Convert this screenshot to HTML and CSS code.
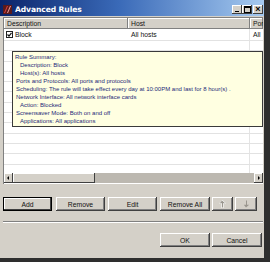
FILE: index.html
```html
<!DOCTYPE html>
<html lang="en">
<head>
  <meta charset="UTF-8" />
  <title>Advanced Rules</title>
  <link rel="stylesheet" href="styles.css">
</head>
<body>
  <div class="window">
    <div class="titlebar">
      <svg class="app-icon" width="9" height="9" viewBox="0 0 9 9">
        <rect x="0" y="0" width="9" height="9" fill="#5a1a1a"/>
        <path d="M1 8 L4 1 L5 1 L2 8 Z" fill="#e04040"/>
        <path d="M4 8 L7 1 L8 1 L5 8 Z" fill="#f0a0a0"/>
      </svg>
      <span class="title">Advanced Rules</span>
      <div class="caption-btns">
        <span class="cbtn"><i class="min"></i></span>
        <span class="cbtn"><i class="max"></i></span>
        <span class="cbtn close">×</span>
      </div>
    </div>

    <div class="list">
      <div class="list-head">
        <div class="col">Description</div>
        <div class="col">Host</div>
        <div class="col">Por</div>
      </div>
      <div class="rows">
        <div class="row">
          <div class="cell">
            <svg class="check" width="7" height="7" viewBox="0 0 7 7">
              <rect x="0.5" y="0.5" width="6" height="6" fill="#fff" stroke="#222"/>
              <path d="M1.5 3.5 L3 5 L5.5 1.8" fill="none" stroke="#111" stroke-width="1.2"/>
            </svg>Block
          </div>
          <div class="cell">All hosts</div>
          <div class="cell">All</div>
        </div>
        <div class="row"></div>
        <div class="row"></div>
        <div class="row"></div>
        <div class="row"></div>
        <div class="row"></div>
        <div class="row"></div>
        <div class="row"></div>
        <div class="row"></div>
        <div class="row"></div>
        <div class="row"></div>
        <div class="row"></div>
        <div class="row"></div>
        <div class="row"></div>

        <div class="tooltip">
          <div>Rule Summary:</div>
          <div class="ind">Description: Block</div>
          <div class="ind">Host(s): All hosts</div>
          <div class="sm">Ports and Protocols: All ports and protocols</div>
          <div class="sm">Scheduling: The rule will take effect every day at 10:00PM and last for 8 hour(s) .</div>
          <div class="sm">Network Interface: All network interface cards</div>
          <div class="ind">Action: Blocked</div>
          <div class="sm">Screensaver Mode: Both on and off</div>
          <div class="ind">Applications: All applications</div>
        </div>
      </div>
      <div class="hscroll">
        <span class="arrow left"></span>
        <span class="thumb"></span>
        <span class="track"></span>
        <span class="arrow right"></span>
      </div>
    </div>

    <div class="actions">
      <button class="btn default">Add</button>
      <button class="btn">Remove</button>
      <button class="btn">Edit</button>
      <button class="btn wide">Remove All</button>
      <button class="btn icon">
        <svg width="7" height="8" viewBox="0 0 7 8"><path d="M3.5 0 L7 3.5 L4.5 3.5 L4.5 8 L2.5 8 L2.5 3.5 L0 3.5 Z" fill="#fff"/><path d="M3 0.5 L6.2 3.2 L4 3.2 L4 7.5 L3 7.5 L3 3.2 L0.8 3.2 Z" fill="#9a968e"/></svg>
      </button>
      <button class="btn icon down">
        <svg width="7" height="8" viewBox="0 0 7 8"><path d="M3 7.5 L0.8 4.8 L3 4.8 L3 0.5 L4 0.5 L4 4.8 L6.2 4.8 Z" fill="#9a968e"/></svg>
      </button>
    </div>

    <div class="sep"></div>

    <div class="footer">
      <button class="btn ok">OK</button>
      <button class="btn ok">Cancel</button>
    </div>
  </div>
</body>
</html>
```

FILE: styles.css
```css
body {
  margin: 0;
  width: 270px;
  height: 262px;
  overflow: hidden;
  background: #2e2e2e;
  font-family: 'Liberation Sans', Arial, sans-serif;
  font-size: 6.8px;
  color: #111;
}

.window {
  width: 264px;
  height: 258px;
  background: #d4d0c8;
  display: flex;
  flex-direction: column;
}

.titlebar {
  height: 16px;
  display: flex;
  align-items: center;
  padding: 2px 0 0 3px;
  box-sizing: border-box;
  background: linear-gradient(to right, #0a246a 0%, #3a6ab8 45%, #a6caf0 100%);
}

.app-icon {
  margin-right: 3px;
}

.title {
  color: #fff;
  font-weight: bold;
  font-size: 7.6px;
  font-family: 'DejaVu Sans', sans-serif;
  letter-spacing: -0.1px;
}

.caption-btns {
  margin-left: auto;
  margin-right: 1px;
  display: flex;
}

.cbtn {
  width: 10px;
  height: 9px;
  background: #d4d0c8;
  box-shadow: inset -1px -1px #404040, inset 1px 1px #fff;
  display: flex;
  align-items: center;
  justify-content: center;
  font-size: 9px;
  line-height: 9px;
  font-weight: bold;
  color: #000;
}

.cbtn.close {
  margin-left: 1px;
}

.cbtn .min {
  width: 4px;
  height: 1px;
  background: #000;
  margin-top: 4px;
}

.cbtn .max {
  width: 5px;
  height: 4px;
  border: 1px solid #000;
  border-top-width: 2px;
}

.list {
  margin: 1px 1px 0 3px;
  height: 166px;
  background: #fff;
  border-left: 1px solid #808080;
  border-top: 1px solid #808080;
  display: flex;
  flex-direction: column;
  overflow: hidden;
}

.list-head {
  display: grid;
  grid-template-columns: 124px 122px 1fr;
  height: 11px;
  flex: none;
}

.list-head .col {
  background: #d4d0c8;
  box-shadow: inset -1px -1px #808080, inset 1px 1px #fff;
  padding-left: 3px;
  line-height: 11px;
  white-space: nowrap;
  overflow: hidden;
}

.rows {
  position: relative;
  flex: 1;
  overflow: hidden;
  background: linear-gradient(#e4e4e4, #e4e4e4) 245px 0 / 1px 100% no-repeat, #fff;
}

.row {
  display: grid;
  grid-template-columns: 124px 122px 1fr;
  height: 10.3px;
  border-bottom: 1px solid #e2e2e2;
  box-sizing: border-box;
}

.row:first-child {
  height: 12px;
}

.cell {
  display: flex;
  align-items: center;
  padding-left: 2px;
  white-space: nowrap;
  overflow: hidden;
}

.row .cell:nth-child(2),
.row .cell:nth-child(3) {
  padding-left: 3px;
}

.check {
  margin-right: 2px;
}

.tooltip {
  position: absolute;
  left: 8px;
  right: 0;
  top: 22px;
  height: 76px;
  box-sizing: border-box;
  background: #ffffe1;
  border: 1px solid #3a3a3a;
  padding: 1px 0 0 2px;
  color: #1d2a78;
  font-size: 6px;
  line-height: 8px;
  white-space: nowrap;
  overflow: hidden;
}

.tooltip .ind {
  padding-left: 5px;
}

.tooltip .sm {
  padding-left: 1px;
}

.hscroll {
  height: 10px;
  display: flex;
  flex: none;
  margin-bottom: 1px;
}

.hscroll .arrow {
  width: 9px;
  background: #d4d0c8;
  box-shadow: inset -1px -1px #404040, inset 1px 1px #fff;
  position: relative;
}

.hscroll .arrow::after {
  content: "";
  position: absolute;
  top: 3px;
  border-top: 2px solid transparent;
  border-bottom: 2px solid transparent;
}

.hscroll .left::after {
  left: 3px;
  border-right: 2px solid #000;
}

.hscroll .right::after {
  left: 4px;
  border-left: 2px solid #000;
}

.hscroll .thumb {
  width: 82px;
  background: #d4d0c8;
  box-shadow: inset -1px -1px #404040, inset 1px 1px #fff;
}

.hscroll .track {
  flex: 1;
  background: #bcb8b0;
}

.actions {
  display: flex;
  margin-top: 13px;
  padding-left: 3px;
  height: 14px;
}

.btn {
  margin: 0;
  padding: 0;
  border: none;
  height: 14px;
  width: 49px;
  margin-right: 3px;
  background: #d4d0c8;
  font-family: 'Liberation Sans', Arial, sans-serif;
  font-size: 6.8px;
  color: #111;
  box-shadow: inset -1px -1px #404040, inset 1px 1px #fff, inset -2px -2px #808080;
}

.btn.default {
  margin-right: 4px;
  box-shadow: inset 0 0 0 1px #000, inset -2px -2px #404040, inset 2px 2px #fff;
}

.btn.wide {
  width: 50px;
  margin-right: 2px;
}

.btn.icon {
  width: 21px;
  margin-right: 2px;
  display: flex;
  align-items: center;
  justify-content: center;
}

.btn.icon.down {
  width: 22px;
}

.sep {
  margin: 10px 1px 0 3px;
  height: 0;
  border-top: 1px solid #808080;
  border-bottom: 1px solid #fff;
}

.footer {
  display: flex;
  justify-content: flex-end;
  margin-top: 10px;
  padding-right: 2px;
}

.btn.ok {
  width: 50px;
  height: 14px;
  margin-right: 0;
  margin-left: 2px;
}
```
